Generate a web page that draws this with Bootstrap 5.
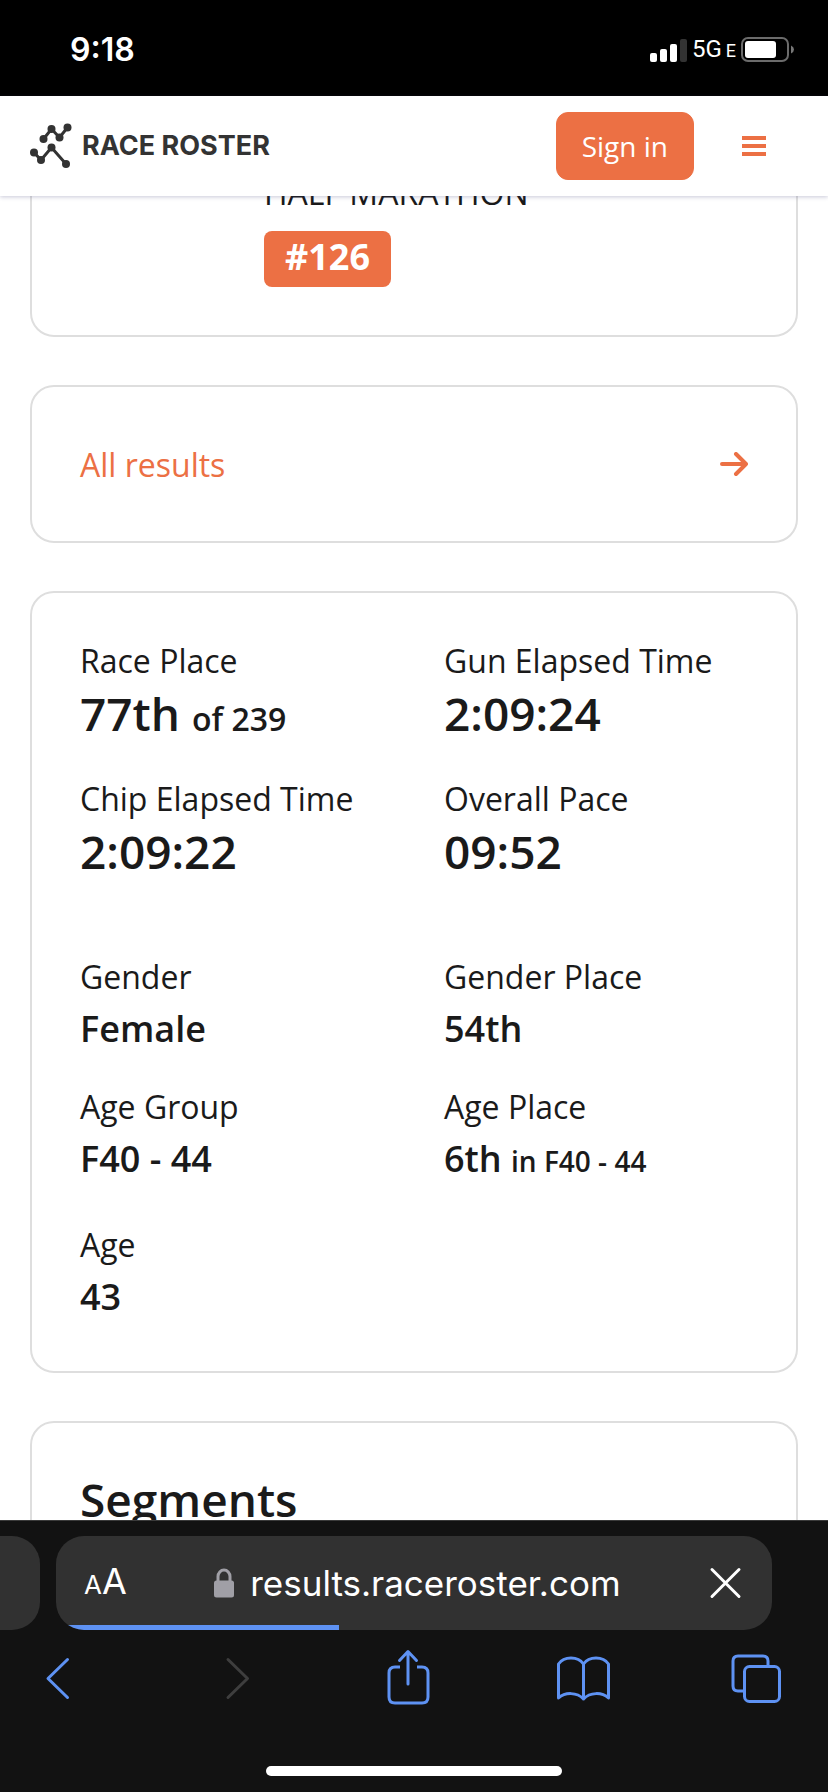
<!DOCTYPE html>
<html lang="en">
<head>
<meta charset="utf-8">
<meta name="viewport" content="width=device-width, initial-scale=1">
<title>Race Roster results</title>
<link href="https://cdn.jsdelivr.net/npm/bootstrap@5.3.0/dist/css/bootstrap.min.css" rel="stylesheet">
<style>
  :root { --brand: #ec7044; --ink: #1a1a1a; --chrome-blue: #5e92f3; }
  body { font-family: "Open Sans", sans-serif; color: var(--ink); background: #fff; }
  svg { display: block; }

  .status { height: 96px; padding: 4px 33px 0 70px; background: #000; color: #fff; }
  .clock { font: 600 32px/40px Inter, sans-serif; }
  .net { font: 400 24px/32px Roboto, sans-serif; padding: 0 5px; }
  .net small { font-size: 18px; }

  .site-header { height: 100px; padding: 0 46px 0 30px; background: #fff; z-index: 2; box-shadow: 0 1px 4px rgba(60, 60, 120, .28); }
  .wordmark { font: 700 27px/32px Inter, sans-serif; color: #333; text-decoration: none; }
  .btn-brand { --bs-btn-bg: var(--brand); --bs-btn-color: #fff; --bs-btn-border-color: var(--brand); --bs-btn-hover-bg: #d95f34; --bs-btn-hover-color: #fff;
    --bs-btn-font-size: 28px; --bs-btn-line-height: 40px; --bs-btn-padding-x: 25px; --bs-btn-padding-y: 13px; --bs-btn-border-radius: 12px; margin-right: 32px; }
  .menu-btn { width: 56px; height: 56px; }

  .page { padding: 0 30px; min-height: 0; overflow: hidden; }
  .panel { border: 2px solid #dedede; border-radius: 24px; padding: 48px; margin-bottom: 48px; flex-shrink: 0; }
  .panel-runner { margin-top: -73px; }
  .avatar { width: 152px; }
  .event-name, .stat dt, .all-link { font-size: 32px; line-height: 40px; font-weight: 400; }
  .bib-row { margin-top: 18px; }
  .bib { font-size: 36px; line-height: 44px; padding: 4px 21px 8px; border-radius: 8px; background: var(--brand); color: #fff; }
  .all-link { color: var(--brand); text-decoration: none; padding: 10px 0 8px; }
  .panel-stats { padding-bottom: 42px; }
  .stat-grid { display: grid; grid-template-columns: 1fr 1fr; column-gap: 60px; }
  .stat { margin-bottom: 34px; }
  .stat dd { font-size: 46px; line-height: 64px; font-weight: 600; margin: 0; white-space: nowrap; }
  .stat dd span { font-size: 32px; line-height: 1; }
  .stat-detail .stat { margin-bottom: 26px; }
  .stat-detail .stat.wide { margin-bottom: 34px; }
  .stat-detail .stat:last-child { margin-bottom: 0; }
  .stat-detail dd { font-size: 36px; }
  .stat-detail dd span { font-size: 28px; }
  .section-title { font-size: 46px; line-height: 56px; font-weight: 600; }

  .browser { background: #121212; border-top: 1px solid #3a3a3a; padding-top: 15px; z-index: 2; font-family: Inter, sans-serif; color: #fff; }
  .tab-peek { width: 40px; height: 94px; background: #313131; border-radius: 0 28px 28px 0; }
  .address { height: 94px; margin: 0 56px 0 16px; padding: 0 28px; background: #313131; border-radius: 28px; overflow: hidden; }
  .load-bar { left: 0; bottom: 0; height: 5px; background: var(--chrome-blue); }
  .text-size { font-size: 36px; line-height: 44px; }
  .text-size small { font-size: 26px; }
  .url { font-size: 35px; line-height: 44px; }
  .tools { padding: 17px 42px 0 28px; color: var(--chrome-blue); }
  .tools svg, .address svg { fill: none; stroke: currentColor; stroke-width: 3; stroke-linecap: round; stroke-linejoin: round; }
  .home-bar { width: 296px; height: 10px; margin: 59px auto 16px; background: #fff; }
</style>
</head>
<body class="vh-100 d-flex flex-column overflow-hidden">

<div class="status d-flex justify-content-between align-items-center flex-shrink-0">
  <span class="clock">9:18</span>
  <div class="d-flex align-items-center">
    <svg width="37" height="23" viewBox="0 0 37 23" fill="#fff" aria-hidden="true">
      <rect x="0" y="14" width="7" height="9" rx="2"/><rect x="10" y="10" width="7" height="13" rx="2"/>
      <rect x="20" y="5" width="7" height="18" rx="2"/><rect x="30" y="0" width="7" height="23" rx="2" fill="#333"/>
    </svg>
    <span class="net">5G<small class="ms-1">E</small></span>
    <svg width="54" height="26" viewBox="0 0 54 26" aria-hidden="true">
      <rect x="1" y="1" width="46" height="23" rx="6" fill="none" stroke="#6b6b6b" stroke-width="2"/>
      <rect x="4" y="4" width="31" height="17" rx="3" fill="#fff"/>
      <path d="M50 8.500q3 1.500 3 4t-3 4z" fill="#777"/>
    </svg>
  </div>
</div>

<header class="site-header d-flex align-items-center position-relative flex-shrink-0">
  <a class="wordmark d-flex align-items-center me-auto" href="#">
    <svg class="me-2" width="44" height="46" viewBox="0 0 44 46" fill="#333" stroke="#333" aria-hidden="true">
      <path d="M13.500 16 21.500 6 29.500 14.500 37.500 4.500M4 29.500 11 37 21.500 24.500 36 41" fill="none" stroke-width="3"/>
      <g stroke="none"><circle cx="13.500" cy="16" r="4"/><circle cx="21.500" cy="6" r="4"/><circle cx="29.500" cy="14.500" r="4"/><circle cx="37.500" cy="4.500" r="4"/>
      <circle cx="4" cy="29.500" r="4"/><circle cx="11" cy="37" r="4"/><circle cx="21.500" cy="24.500" r="4"/><circle cx="36" cy="41" r="4"/></g>
    </svg>
    <span>RACE ROSTER</span>
  </a>
  <button class="btn btn-brand" type="button">Sign in</button>
  <button class="menu-btn btn p-0 border-0 d-flex align-items-center justify-content-center" type="button" aria-label="Menu">
    <svg width="24" height="20" viewBox="0 0 24 20" fill="#ec7044"><path d="M0 0h24v4H0zM0 8h24v4H0zM0 16h24v4H0z"/></svg>
  </button>
</header>

<main class="page flex-grow-1 d-flex flex-column">
  <section class="panel panel-runner d-flex">
    <div class="avatar me-2 pe-4 flex-shrink-0"></div>
    <div class="ms-4">
      <div class="event-name">HALF MARATHON</div>
      <div class="bib-row d-flex"><strong class="bib">#126</strong></div>
    </div>
  </section>

  <section class="panel">
    <a class="all-link d-flex justify-content-between align-items-center" href="#">
      <span>All results</span>
      <svg width="30" height="26" viewBox="0 0 30 26" fill="none" stroke="#ec7044" stroke-width="4" stroke-linecap="round" stroke-linejoin="round" aria-hidden="true"><path d="M4 12H28M18 2l10 10-10 10"/></svg>
    </a>
  </section>

  <section class="panel panel-stats">
    <dl class="stat-grid mb-0 pb-2">
      <div class="stat"><dt>Race Place</dt><dd>77th <span>of 239</span></dd></div>
      <div class="stat"><dt>Gun Elapsed Time</dt><dd>2:09:24</dd></div>
      <div class="stat"><dt>Chip Elapsed Time</dt><dd>2:09:22</dd></div>
      <div class="stat"><dt>Overall Pace</dt><dd>09:52</dd></div>
    </dl>
    <dl class="stat-grid stat-detail mb-0 mt-4 pt-2">
      <div class="stat"><dt>Gender</dt><dd>Female</dd></div>
      <div class="stat"><dt>Gender Place</dt><dd>54th</dd></div>
      <div class="stat wide"><dt>Age Group</dt><dd>F40 - 44</dd></div>
      <div class="stat wide"><dt>Age Place</dt><dd>6th <span>in F40 - 44</span></dd></div>
      <div class="stat"><dt>Age</dt><dd>43</dd></div>
    </dl>
  </section>

  <section class="panel">
    <h2 class="section-title">Segments</h2>
  </section>
</main>

<footer class="browser flex-shrink-0 position-relative">
  <div class="d-flex">
    <div class="tab-peek"></div>
    <div class="address flex-grow-1 d-flex align-items-center justify-content-between position-relative">
      <button class="text-size btn p-0 border-0 text-white" type="button" aria-label="Page settings"><small>A</small>A</button>
      <div class="url d-flex align-items-center">
        <svg class="me-3" width="20" height="30" viewBox="0 0 20 30" style="color:#a09fa6" aria-hidden="true">
          <path d="M4 14V8.500a6 6.500 0 0 1 12 0V14"/><rect x="0" y="12.500" width="20" height="17" rx="2.500" fill="currentColor" stroke="none"/>
        </svg>
        <span>results.raceroster.com</span>
      </div>
      <button class="btn p-0 border-0 text-white" type="button" aria-label="Stop loading">
        <svg width="36" height="32" viewBox="0 0 36 32"><path d="M4 2.500 31 29.500M31 2.500 4 29.500"/></svg>
      </button>
      <div class="load-bar position-absolute" style="width:39.500%"></div>
    </div>
  </div>
  <nav class="tools d-flex justify-content-between">
    <button class="btn p-0 border-0 text-reset" type="button" aria-label="Back"><svg width="60" height="60" viewBox="0 0 60 60"><path d="M39.500 12.500 20 31.500 39.500 50.500"/></svg></button>
    <button class="btn p-0 border-0 text-reset" type="button" aria-label="Forward"><svg width="60" height="60" viewBox="0 0 60 60" style="color:#3e3e3e"><path d="M25 12.500 44.500 31.500 25 50.500"/></svg></button>
    <button class="btn p-0 border-0 text-reset" type="button" aria-label="Share"><svg width="60" height="60" viewBox="0 0 60 60"><path d="M23 20h-5q-6 0-6 6v24q0 6 6 6h27q6 0 6-6V26q0-6-6-6h-5" stroke-linecap="butt"/><path d="M31 37V5M22.500 13.500 31 4.500l8.500 9"/></svg></button>
    <button class="btn p-0 border-0 text-reset" type="button" aria-label="Bookmarks"><svg width="60" height="60" viewBox="0 0 60 60"><path d="M31.500 17C26 9 12 9 6.500 17V51C13 45 25 45 31.500 52C38 45 50 45 56.500 51V17C51 9 37 9 31.500 17V52"/></svg></button>
    <button class="btn p-0 border-0 text-reset" type="button" aria-label="Tabs"><svg width="60" height="60" viewBox="0 0 60 60"><rect x="18.500" y="19.500" width="35" height="35" rx="5"/><path d="M18 44h-6q-5 0-5-5V14q0-5 5-5h25q5 0 5 5v5"/></svg></button>
  </nav>
  <div class="home-bar rounded-pill"></div>
</footer>

<script src="https://cdn.jsdelivr.net/npm/bootstrap@5.3.0/dist/js/bootstrap.bundle.min.js"></script>
</body>
</html>
